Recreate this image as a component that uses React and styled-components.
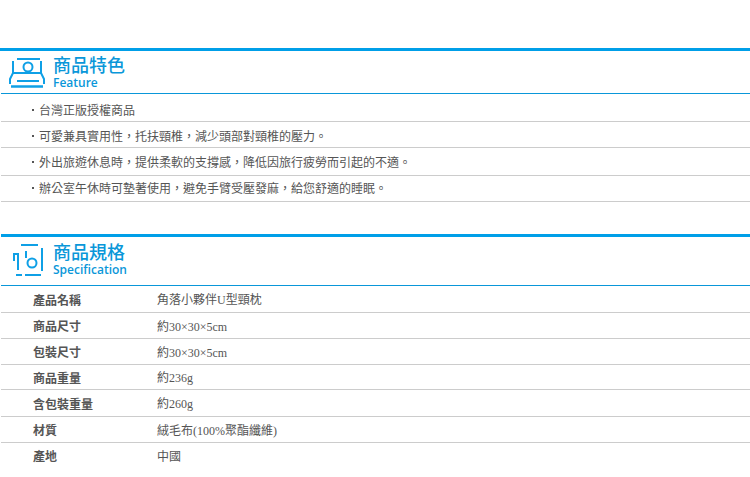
import React from 'react';
import styled, { createGlobalStyle } from 'styled-components';

const GlobalStyle = createGlobalStyle`
  html, body {
    margin: 0;
    padding: 0;
    background: #fff;
  }
  body {
    font-family: "Liberation Serif", "Noto Sans CJK TC", serif;
    color: #555;
  }
`

const Page = styled.div`
  width: 750px;
  height: 477px;
  overflow: hidden;
  padding-top: 48px;
  box-sizing: border-box;
`

const Section = styled.section`
  margin-bottom: ${props => props.$gap || 0}px;
`

const Bar = styled.div`
  height: 3px;
  margin-left: ${props => props.$inset || 0}px;
  background: #009fe8;
`

const Head = styled.div`
  height: ${props => props.$height}px;
  margin-left: 1px;
  border-bottom: 1px solid #0a97d9;
  display: flex;
  align-items: flex-start;
  padding-left: ${props => props.$pad}px;
  gap: ${props => props.$gap}px;
`

const IconBox = styled.div`
  display: flex;
  margin-top: ${props => props.$top}px;
`

const HeadText = styled.div`
  display: flex;
  flex-direction: column;
  margin-top: ${props => props.$top}px;
  color: #0a97d9;
`

const HeadTitle = styled.div`
  font-family: "Liberation Sans", "Noto Sans CJK TC", sans-serif;
  font-size: 18px;
  font-weight: 500;
  line-height: 20px;
`

const HeadSub = styled.div`
  font-family: "Open Sans", sans-serif;
  font-size: 12px;
  font-weight: 600;
  line-height: 14px;
`

const FeatureRow = styled.div`
  height: ${props => props.$height}px;
  margin-left: 1px;
  border-bottom: 1px solid #ccc;
  padding-left: 31px;
  display: flex;
  align-items: flex-start;
  gap: 5px;
  font-family: "Noto Sans CJK TC", sans-serif;
  font-size: 12px;
  line-height: 16px;
  & > span {
    margin-top: ${props => props.$top}px;
  }
  &::before {
    content: "";
    width: 2px;
    height: 2px;
    margin-top: ${props => props.$top + 7}px;
    background: #555;
  }
`

const SpecTable = styled.dl`
  margin: 0;
`

const SpecRow = styled.div`
  height: ${props => props.$height}px;
  margin-left: 1px;
  border-bottom: 1px solid #ccc;
  padding-left: 32px;
  display: flex;
  align-items: center;
  font-size: 12px;
  &:last-child {
    border-bottom: 0;
  }
`

const SpecName = styled.dt`
  width: 124px;
  font-family: "Noto Sans CJK TC", sans-serif;
  font-weight: 700;
`

const SpecValue = styled.dd`
  margin: 0;
`

const features = [
  { text: '台灣正版授權商品', height: 27, top: 8 },
  { text: '可愛兼具實用性，托扶頸椎，減少頭部對頸椎的壓力。', height: 25, top: 6 },
  { text: '外出旅遊休息時，提供柔軟的支撐感，降低因旅行疲勞而引起的不適。', height: 27, top: 6 },
  { text: '辦公室午休時可墊著使用，避免手臂受壓發麻，給您舒適的睡眠。', height: 25, top: 4 },
];

const specs = [
  { name: '產品名稱', value: '角落小夥伴U型頸枕', height: 26 },
  { name: '商品尺寸', value: '約30×30×5cm', height: 25 },
  { name: '包裝尺寸', value: '約30×30×5cm', height: 25 },
  { name: '商品重量', value: '約236g', height: 24 },
  { name: '含包裝重量', value: '約260g', height: 26 },
  { name: '材質', value: '絨毛布(100%聚酯纖維)', height: 25 },
  { name: '產地', value: '中國', height: 25 },
];

function FeatureIcon() {
  return (
    <svg width="37" height="31" viewBox="0 0 37 31" fill="none" stroke="#0fa0e6" strokeWidth="2">
      <path d="M8 2H31" />
      <path d="M4 4V16H32V4" />
      <circle cx="19" cy="10" r="4.5" />
      <path d="M4 16L1 22V27" />
      <path d="M32 16L35 22V27" />
      <path d="M8 24H30" />
      <path d="M2 29.5H34" strokeWidth="2.5" />
    </svg>
  );
}

function SpecIcon() {
  return (
    <svg width="31" height="34" viewBox="0 0 31 34" fill="none" stroke="#0fa0e6" strokeWidth="2">
      <path d="M8 2H25" />
      <path d="M29 5V28" />
      <path d="M3 32H9M12 32H28" />
      <path d="M1 18V11H5V27" />
      <path d="M13 8V15" />
      <circle cx="19" cy="20" r="4.5" />
    </svg>
  );
}

export default function App() {
  return (
    <Page>
      <GlobalStyle />
      <Section $gap={32}>
        <Bar />
        <Head $height={42} $pad={8} $gap={7}>
          <IconBox $top={6}><FeatureIcon /></IconBox>
          <HeadText $top={5}>
            <HeadTitle>商品特色</HeadTitle>
            <HeadSub>Feature</HeadSub>
          </HeadText>
        </Head>
        {features.map(row => (
          <FeatureRow key={row.text} $height={row.height} $top={row.top}>
            <span>{row.text}</span>
          </FeatureRow>
        ))}
      </Section>
      <Section>
        <Bar $inset={1} />
        <Head $height={48} $pad={12} $gap={9}>
          <IconBox $top={6}><SpecIcon /></IconBox>
          <HeadText $top={6}>
            <HeadTitle>商品規格</HeadTitle>
            <HeadSub>Specification</HeadSub>
          </HeadText>
        </Head>
        <SpecTable>
          {specs.map(row => (
            <SpecRow key={row.name} $height={row.height}>
              <SpecName>{row.name}</SpecName>
              <SpecValue>{row.value}</SpecValue>
            </SpecRow>
          ))}
        </SpecTable>
      </Section>
    </Page>
  );
}
